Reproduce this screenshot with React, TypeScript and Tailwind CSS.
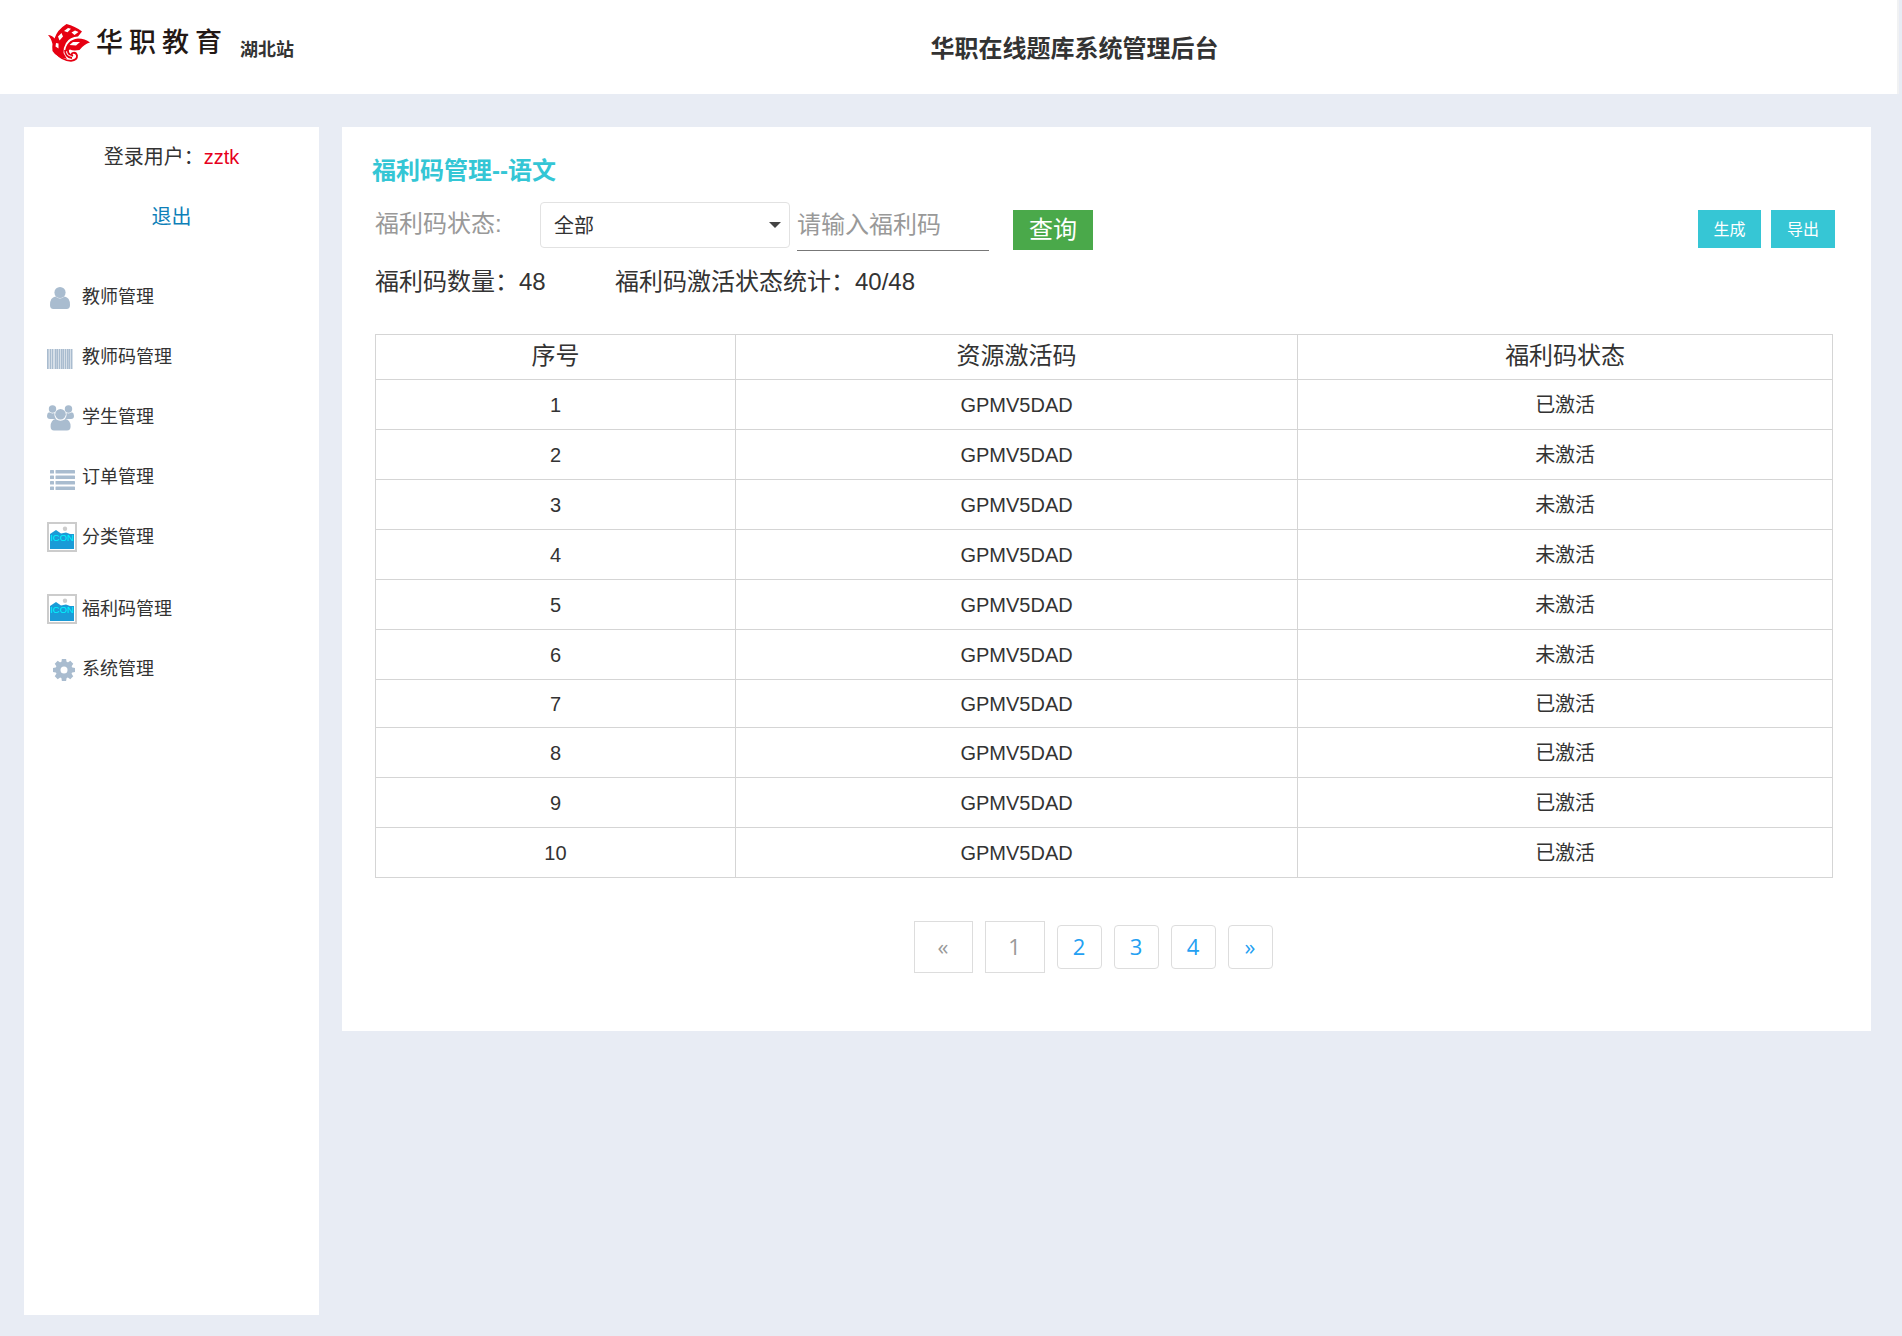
import { useState } from "react";
import type { ReactNode } from "react";

const codes = [
  { id: 1, code: "GPMV5DAD", active: true },
  { id: 2, code: "GPMV5DAD", active: false },
  { id: 3, code: "GPMV5DAD", active: false },
  { id: 4, code: "GPMV5DAD", active: false },
  { id: 5, code: "GPMV5DAD", active: false },
  { id: 6, code: "GPMV5DAD", active: false },
  { id: 7, code: "GPMV5DAD", active: true },
  { id: 8, code: "GPMV5DAD", active: true },
  { id: 9, code: "GPMV5DAD", active: true },
  { id: 10, code: "GPMV5DAD", active: true },
];

const MenuIcon = ({ children }: { children: ReactNode }) => (
  <svg viewBox="0 0 30 30" className="h-[30px] w-[30px] shrink-0 fill-[#a9bccf]" aria-hidden="true">
    {children}
  </svg>
);

const UserIcon = () => (
  <MenuIcon>
    <circle cx="13" cy="10.5" r="5.6" />
    <path d="M8.5 14.6Q13 18.4 17.5 14.6Q23 15.6 23 23Q23 27 19.6 27H6.4Q3 27 3 23Q3 15.6 8.5 14.6Z" />
  </MenuIcon>
);

const bars = [0, 3, 5, 8, 10, 12, 14, 16, 18, 20, 22, 24];
const BarcodeIcon = () => (
  <MenuIcon>
    <rect x="0" y="7" width="26" height="20" fill="#d6dfe8" />
    {bars.map((x, i) => (
      <rect key={x} x={x} y="7" width={i % 3 === 0 ? 1.5 : 1} height="20" />
    ))}
  </MenuIcon>
);

const UsersIcon = () => (
  <MenuIcon>
    <circle cx="5.5" cy="7" r="3.7" />
    <circle cx="21.5" cy="7" r="3.7" />
    <circle cx="13.5" cy="12.3" r="5.3" />
    <path d="M2 10.3Q5 12.2 7.4 11Q7 14.4 9 17H3Q0 17 0 14Q0 11 2 10.3Z" />
    <path d="M25 10.3Q22 12.2 19.6 11Q20 14.4 18 17H24Q27 17 27 14Q27 11 25 10.3Z" />
    <path d="M8.6 17Q13.5 20.6 18.4 17Q23.6 18 23.6 24.5Q23.6 28.5 20 28.5H7Q3.6 28.5 3.6 24.5Q3.6 18 8.6 17Z" />
  </MenuIcon>
);

const ListIcon = () => (
  <MenuIcon>
    {[8, 13.5, 19, 24.5].map((y) => (
      <g key={y}>
        <rect x="3" y={y} width="4" height="3.6" rx="0.6" />
        <rect x="8.5" y={y} width="19.5" height="3.6" rx="0.6" />
      </g>
    ))}
  </MenuIcon>
);

const CogIcon = () => (
  <MenuIcon>
    {[0, 45, 90, 135].map((deg) => (
      <path key={deg} d="M14.9 5H19.1L20 10V22L19.1 27H14.9L14 22V10Z" transform={`rotate(${deg} 17 16)`} />
    ))}
    <circle cx="17" cy="16" r="8.4" />
    <circle cx="17" cy="16" r="3.5" fill="#fff" />
  </MenuIcon>
);

const PictureIcon = () => (
  <MenuIcon>
    <rect x="1" y="1" width="28" height="28" fill="#fff" stroke="#ccc" strokeWidth="2" />
    <circle cx="18" cy="6.8" r="2.2" fill="#ccc" />
    <path d="M3 12L9 8L14 11.5L19 10.5L23 12H27V27H3Z" fill="#1a9bd7" />
    <text x="15" y="18.6" textAnchor="middle" fontSize="9.5" fill="#00f6ff">
      ICON
    </text>
  </MenuIcon>
);

const menu = [
  { label: "教师管理", icon: <UserIcon /> },
  { label: "教师码管理", icon: <BarcodeIcon /> },
  { label: "学生管理", icon: <UsersIcon /> },
  { label: "订单管理", icon: <ListIcon /> },
  { label: "分类管理", icon: <PictureIcon /> },
  { label: "福利码管理", icon: <PictureIcon />, spaced: true },
  { label: "系统管理", icon: <CogIcon /> },
];

const Logo = () => (
  <div className="flex items-center gap-[6px]">
    <svg viewBox="0 0 42 38" className="h-[38px] w-[42px]" aria-hidden="true">
      {/* upper wing and body */}
      <path
        fill="#e60012"
        d="M0 11Q4 11 6.500 14.500Q9 6 18.500 0Q27 2 34 7.500L30 12.500Q22 12.500 18 19Q15 24 15.500 29L19 35Q8 33 4.500 27Q4 23 4.500 20Q3 14 0 11Z"
      />
      {/* lower wing */}
      <path fill="#e60012" d="M17 28Q18 16 30 14.500Q37 14.500 42 18.500Q36 20 31.500 26Q25 27 22 25.500Z" />
      <path
        fill="#fff"
        d="M16 7L20 4L23 4.800L19.500 8.200ZM23.500 8.500L27 6.500L30.500 8L26.500 11ZM10 12.500L13.500 9L15 12.500L11.500 16.500ZM8 19L10.500 19.500L10.500 24.500L7.500 22.500ZM21.500 21L25 18L32 18L28 21.500Z"
      />
      {/* tail */}
      <path
        fill="none"
        stroke="#e60012"
        strokeWidth="1.800"
        d="M8 29Q14 36.500 23 36.800Q29.500 36 29 31.500Q28 28 24.500 29Q22.500 31 25 32M17 26Q17 33 24 34M20 25Q19.500 30 23 31"
      />
    </svg>
    <div className="flex gap-[6px] text-[27px] leading-8 font-medium text-[#231815]">
      <span>华</span>
      <span>职</span>
      <span>教</span>
      <span>育</span>
    </div>
  </div>
);

const Header = () => {
  return (
    <header className="mr-[3px] flex h-[94px] border-r-2 border-[#f1f2f3] bg-white">
      <div className="flex w-[49%] items-start pl-12 pt-6">
        <Logo />
        <span className="ml-[18px] mt-3 text-[18px] leading-7 font-bold">湖北站</span>
      </div>
      <h1 className="pl-px pt-[33px] text-2xl font-bold">华职在线题库系统管理后台</h1>
    </header>
  );
};

const Sidebar = () => {
  return (
    <aside className="w-[295px] shrink-0 bg-white">
      <div className="flex flex-col items-center gap-8 pt-4 text-[20px] leading-7">
        <p>
          登录用户：<span className="text-[#e60020]">zztk</span>
        </p>
        <a href="#" className="text-[#0e7fb8]">
          退出
        </a>
      </div>
      <nav className="mt-9 pl-[23px]">
        {menu.map((item) => (
          <a
            key={item.label}
            href="#"
            className={`flex h-[60px] items-center gap-[5px] text-[18px] ${item.spaced ? "mt-3" : ""}`}
          >
            {item.icon}
            <span className="pt-px">{item.label}</span>
          </a>
        ))}
      </nav>
    </aside>
  );
};

const Pagination = () => {
  return (
    <nav
      aria-label="分页"
      className="mt-[43px] flex items-center justify-center gap-3 pr-[22px] font-['Open_Sans','Noto_Sans_CJK_SC',sans-serif] text-[22px]"
    >
      <button disabled className="h-[52px] w-[59px] border border-[#ddd] pb-0.5 text-[#999]">
        «
      </button>
      <button disabled className="h-[52px] w-[60px] border border-[#ddd] pb-0.5 text-[#999]">
        1
      </button>
      {["2", "3", "4", "»"].map((page) => (
        <button key={page} className="h-11 w-[45px] rounded border border-[#ddd] pb-0.5 text-[#23a0f2]">
          {page}
        </button>
      ))}
    </nav>
  );
};

const App = () => {
  const [status, setStatus] = useState("全部");
  const [keyword, setKeyword] = useState("");

  return (
    <div className="flex min-h-screen flex-col bg-[#e8ecf4] font-['Liberation_Sans','Noto_Sans_CJK_SC',sans-serif] text-[#333]">
      <Header />
      <div className="flex flex-1 gap-[23px] pb-[21px] pl-6 pr-[31px] pt-[33px]">
        <Sidebar />

        <main className="flex-1 self-start bg-white pb-[58px] pl-[33px] pr-[38px] pt-7">
          <h2 className="-ml-[3px] text-2xl font-bold text-[#34c6d5]">福利码管理--语文</h2>

          {/* filters */}
          <div className="mt-[15px] flex h-12 items-start">
            <label htmlFor="status" className="w-[165px] pt-[6px] text-2xl text-[#999]">
              福利码状态:
            </label>
            <div className="relative">
              <select
                id="status"
                value={status}
                onChange={(e) => setStatus(e.target.value)}
                className="h-[46px] w-[250px] appearance-none rounded border border-[#e2e2e2] bg-white pl-[13px] pt-0.5 text-[20px]"
              >
                <option>全部</option>
                <option>已激活</option>
                <option>未激活</option>
              </select>
              <span className="pointer-events-none absolute right-[9px] top-5 border-x-6 border-t-6 border-x-transparent border-t-[#444]" />
            </div>
            <input
              type="text"
              aria-label="福利码"
              placeholder="请输入福利码"
              value={keyword}
              onChange={(e) => setKeyword(e.target.value)}
              className="ml-[7px] h-[49px] w-[192px] border-b border-[#777] pb-0.5 text-2xl placeholder:text-[#999]"
            />
            <button className="ml-6 mt-2 h-10 w-20 bg-[#4aa94a] pb-px text-2xl text-white">查询</button>
            <div className="-mr-[2px] ml-auto mt-2 flex gap-[10px]">
              <button className="h-[38px] w-[63px] bg-[#36c6d5] pt-0.5 text-base text-white">生成</button>
              <button className="h-[38px] w-[64px] bg-[#36c6d5] pt-0.5 text-base text-white">导出</button>
            </div>
          </div>

          <div className="mt-4 flex text-2xl">
            <p className="w-[240px]">福利码数量：48</p>
            <p>福利码激活状态统计：40/48</p>
          </div>

          <table className="mt-9 w-full table-fixed border-collapse text-center text-[20px]">
            <thead>
              <tr className="h-[45px] text-2xl">
                <th className="w-[24.7%] border border-[#d5d5d5] pb-[2px] font-normal">序号</th>
                <th className="w-[38.6%] border border-[#d5d5d5] pb-[2px] font-normal">资源激活码</th>
                <th className="border border-[#d5d5d5] pb-[2px] font-normal">福利码状态</th>
              </tr>
            </thead>
            <tbody>
              {codes.map((row) => (
                <tr key={row.id} className={row.id === 7 ? "h-12" : "h-[50px]"}>
                  <td className="border border-[#d5d5d5]">{row.id}</td>
                  <td className="border border-[#d5d5d5]">{row.code}</td>
                  <td className="border border-[#d5d5d5]">{row.active ? "已激活" : "未激活"}</td>
                </tr>
              ))}
            </tbody>
          </table>

          <Pagination />
        </main>
      </div>
    </div>
  );
};

export default App;
